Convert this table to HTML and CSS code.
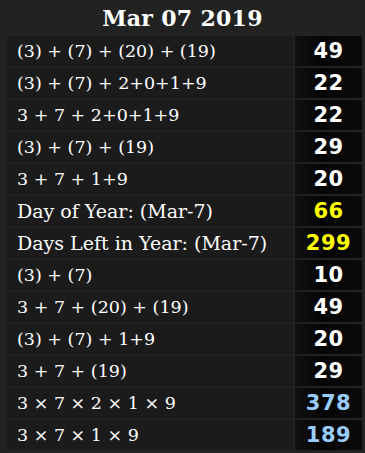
FILE: index.html
```html
<!DOCTYPE html>
<html>
<head>
<meta charset="utf-8">
<link rel="stylesheet" href="styles.css">
</head>
<body>
<div class="title">Mar 07 2019</div>
<table class="calc">
<tr><td class="expr">(3) + (7) + (20) + (19)</td><td class="val">49</td></tr>
<tr><td class="expr">(3) + (7) + 2+0+1+9</td><td class="val">22</td></tr>
<tr><td class="expr">3 + 7 + 2+0+1+9</td><td class="val">22</td></tr>
<tr><td class="expr">(3) + (7) + (19)</td><td class="val">29</td></tr>
<tr><td class="expr">3 + 7 + 1+9</td><td class="val">20</td></tr>
<tr><td class="expr label">Day of Year: (Mar-7)</td><td class="val yellow">66</td></tr>
<tr><td class="expr label">Days Left in Year: (Mar-7)</td><td class="val yellow">299</td></tr>
<tr><td class="expr">(3) + (7)</td><td class="val">10</td></tr>
<tr><td class="expr">3 + 7 + (20) + (19)</td><td class="val">49</td></tr>
<tr><td class="expr">(3) + (7) + 1+9</td><td class="val">20</td></tr>
<tr><td class="expr">3 + 7 + (19)</td><td class="val">29</td></tr>
<tr><td class="expr">3 × 7 × 2 × 1 × 9</td><td class="val blue">378</td></tr>
<tr><td class="expr">3 × 7 × 1 × 9</td><td class="val blue">189</td></tr>
</table>
</body>
</html>
```
FILE: styles.css
```css
html, body {
  margin: 0;
  padding: 0;
  background: #222222;
}
body {
  width: 365px;
  height: 453px;
  overflow: hidden;
}
.title {
  height: 34px;
  line-height: 36px;
  text-align: center;
  color: #ffffff;
  font-family: "DejaVu Serif", serif;
  font-weight: bold;
  font-size: 22px;
  letter-spacing: 0.3px;
}
.calc {
  margin-left: 5px;
  width: 359px;
  border-collapse: separate;
  border-spacing: 2px;
}
.calc td {
  height: 30px;
  padding: 0;
}
.calc .expr {
  width: 276px;
  background: #1b1b1b;
  padding-left: 10px;
  color: #ffffff;
  font-family: "DejaVu Serif", serif;
  font-size: 17.5px;
}
.calc .label {
  font-size: 19px;
}
.calc .val {
  background: linear-gradient(to right, #111111, #050505 40%, #0b0b0b);
  text-align: center;
  color: #ffffff;
  font-family: "DejaVu Sans", sans-serif;
  font-weight: bold;
  font-size: 21px;
  letter-spacing: 0.5px;
}
.calc .yellow { color: #ffff00; }
.calc .blue { color: #99ccff; }
```
